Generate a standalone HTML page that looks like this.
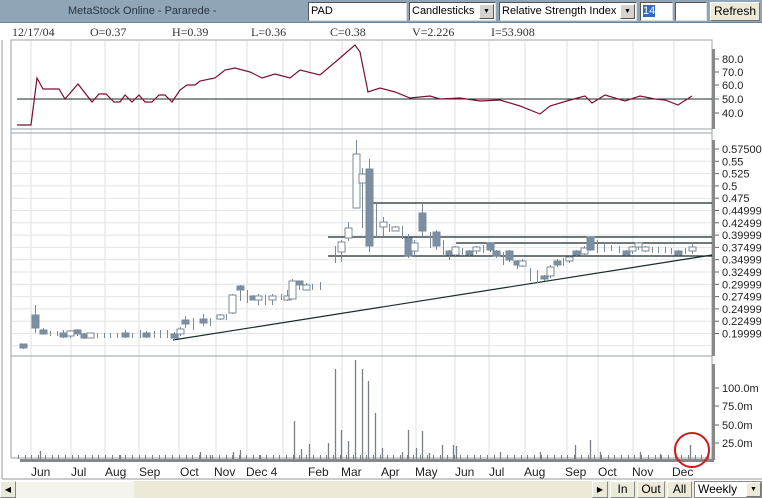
<!DOCTYPE html>
<html><head><meta charset="utf-8"><style>
*{margin:0;padding:0;box-sizing:border-box}
body{width:762px;height:498px;overflow:hidden;background:#fff;font-family:"Liberation Sans",sans-serif;position:relative}
.a{position:absolute}
#title{left:0;top:0;width:762px;height:23px;background:#8fa5b8;border-bottom:1px solid #6d8396}
.inp{background:#fff;border:1px solid #555;border-right-color:#ddd;border-bottom-color:#ddd;font-size:11px;padding-left:2px;line-height:16px;height:19px;top:2px;white-space:nowrap;overflow:hidden}
.sel .btn{position:absolute;right:1px;top:1px;width:15px;height:15px;background:#d6d3ce;border:1px solid;border-color:#fff #555 #555 #fff;font-size:7px;text-align:center;line-height:13px}
#info span{position:absolute;top:25px;font-family:"Liberation Serif",serif;font-size:12px;color:#333}
.bt{background:#ece9d8;border:1px solid;border-color:#fff #888 #888 #fff;font-size:12px;text-align:center;line-height:15px;height:17px;top:481px}
</style></head><body>
<div id="title" class="a"></div>
<div class="a" style="left:68px;top:5px;font-size:11px;color:#2a3542">MetaStock Online - Pararede -</div>
<div class="a inp" style="left:308px;width:99px">PAD</div>
<div class="a inp sel" style="left:409px;width:87px">Candlesticks<div class="btn">▼</div></div>
<div class="a inp sel" style="left:499px;width:138px">Relative Strength Index<div class="btn">▼</div></div>
<div class="a inp" style="left:640px;width:33px"><span style="background:#316ac5;color:#fff">14</span></div>
<div class="a inp" style="left:675px;width:32px"></div>
<div class="a" style="left:710px;top:2px;width:50px;height:19px;background:#ece9d8;border:1px solid;border-color:#fff #777 #777 #fff;font-size:12px;text-align:center;line-height:17px">Refresh</div>
<div id="info">
<span style="left:12px">12/17/04</span><span style="left:90px">O=0.37</span><span style="left:172px">H=0.39</span><span style="left:251px">L=0.36</span><span style="left:330px">C=0.38</span><span style="left:412px">V=2.226</span><span style="left:491px">I=53.908</span>
</div>
<svg class="a" style="left:0;top:0" width="762" height="498" id="ch" font-family="Liberation Sans" font-size="11" fill="#222">
<line x1="2" y1="40" x2="2" y2="479" stroke="#999"/>
<line x1="2" y1="479" x2="762" y2="479" stroke="#999"/>
<g id="grid"></g>
<rect x="11" y="40" width="701" height="418" fill="none" stroke="#9aa0a6"/>
<line x1="11" y1="129" x2="712" y2="129" stroke="#9aa0a6"/>
<line x1="11" y1="133" x2="712" y2="133" stroke="#9aa0a6"/>
<line x1="11" y1="356" x2="712" y2="356" stroke="#9aa0a6"/>
<rect x="712" y="49" width="3" height="80" fill="#888"/>
<rect x="712" y="140" width="3" height="216" fill="#888"/>
<rect x="712" y="364" width="3" height="96" fill="#888"/>
<rect x="20" y="459" width="694" height="3" fill="#888"/>
<g id="labels" font-size="11"></g>
<g id="c"></g>
<circle cx="692" cy="450" r="17" fill="none" stroke="#d01818" stroke-width="2"/>
</svg>
<div class="a" style="left:0;top:481px;width:762px;height:17px;background:#ece9d8"></div>
<div class="a" style="left:16px;top:481px;width:118px;height:17px;background:#f4f3ee;border-top:1px solid #fff"></div>
<div class="a bt" style="left:0;width:16px;font-size:8px">◀</div>
<div class="a bt" style="left:592px;width:16px;font-size:8px">▶</div>
<div class="a bt" style="left:610px;width:25px">In</div>
<div class="a bt" style="left:637px;width:28px">Out</div>
<div class="a bt" style="left:667px;width:25px">All</div>
<div class="a" style="left:694px;top:481px;width:68px;height:17px;background:#fff;border:1px solid #888;font-size:12px;line-height:15px;padding-left:3px">Weekly<div style="position:absolute;right:0;top:0;width:15px;height:15px;background:#ece9d8;border:1px solid;border-color:#fff #777 #777 #fff;font-size:7px;text-align:center;line-height:13px">▼</div></div>
<script>
var NS="http://www.w3.org/2000/svg";
function el(p,t,a,txt){var e=document.createElementNS(NS,t);for(var k in a)e.setAttribute(k,a[k]);if(txt)e.textContent=txt;document.getElementById(p).appendChild(e);return e;}
var gx=[31,71,105,139,179,216,247,283,310,342,382,416,455,489,525,567,598,633,674];
gx.forEach(function(x){el("grid","line",{x1:x,y1:41,x2:x,y2:458,stroke:"#dcdfe2"});});
for(var y=149;y<356;y+=12.3)el("grid","line",{x1:12,y1:y,x2:711,y2:y,stroke:"#e2e4e6"});
[["80.0",63],["70.0",76],["60.0",89],["50.0",103],["40.0",117]].forEach(function(l){el("labels","text",{x:722,y:l[1]},l[0]);el("labels","line",{x1:715,y1:l[1]-4,x2:719,y2:l[1]-4,stroke:"#666"});});
var pl=["0.57500","0.55","0.525","0.5","0.475","0.44999","0.42499","0.39999","0.37499","0.34999","0.32499","0.29999","0.27499","0.24999","0.22499","0.19999"];
pl.forEach(function(t,i){var y=153+i*12.3;el("labels","text",{x:722,y:y},t);el("labels","line",{x1:715,y1:y-4,x2:719,y2:y-4,stroke:"#666"});});
[["100.0m",392],["75.0m",410],["50.0m",429],["25.0m",447]].forEach(function(l){el("labels","text",{x:722,y:l[1]},l[0]);el("labels","line",{x1:715,y1:l[1]-4,x2:719,y2:l[1]-4,stroke:"#666"});});
[["Jun",31],["Jul",71],["Aug",105],["Sep",139],["Oct",180],["Nov",214],["Dec  4",246],["Feb",308],["Mar",341],["Apr",381],["May",415],["Jun",455],["Jul",489],["Aug",524],["Sep",565],["Oct",598],["Nov",632],["Dec",672]].forEach(function(m){el("labels","text",{x:m[1],y:476,"font-size":"12"},m[0]);});
var r=[[17,125],[31,125],[37,78],[43,89],[59,89],[65,99],[78,84],[92,102],[99,94],[106,94],[114,102],[120,102],[125,95],[132,102],[139,95],[145,102],[152,102],[159,95],[165,95],[172,102],[180,90],[187,85],[195,85],[200,81],[215,78],[225,70],[235,68],[250,72],[262,78],[275,74],[290,78],[300,70],[320,75],[340,58],[355,45],[360,52],[368,92],[380,88],[395,92],[410,98],[430,96],[440,99],[460,98],[480,101],[500,100],[520,106],[540,114],[550,106],[570,100],[585,96],[592,103],[605,95],[625,101],[640,96],[655,99],[665,100],[678,105],[692,96]];
el("c","line",{x1:17,y1:99,x2:712,y2:99,stroke:"#1a2a2a"});
el("c","polyline",{points:r.map(function(p){return p.join(",")}).join(" "),fill:"none",stroke:"#7a1030","stroke-width":"1.2"});
[[367,203],[328,237],[456,243],[328,256]].forEach(function(l){el("c","line",{x1:l[0],y1:l[1],x2:712,y2:l[1],stroke:"#1a2a2a","stroke-width":"1.2"});});
el("c","line",{x1:173,y1:340,x2:712,y2:255,stroke:"#1a2a2a","stroke-width":"1.2"});
var cd=[[23,344,349,344,348,1],[35,305,333,315,328,1],[43,328,334,330,334,1],[50,331,336,0,0,0],[57,331,336,0,0,0],[63,330,338,333,337,1],[70,330,338,331,336,0],[77,329,336,330,334,1],[84,333,339,334,338,1],[90,333,338,333,338,0],[97,333,338,0,0,0],[104,333,338,0,0,0],[110,333,338,0,0,0],[117,333,338,0,0,0],[125,330,338,333,337,1],[132,333,338,0,0,0],[140,330,338,0,0,0],[146,331,338,333,337,1],[154,331,338,0,0,0],[160,330,338,0,0,0],[167,330,338,0,0,0],[174,332,340,334,338,1],[180,327,336,329,334,0],[185,316,328,320,324,1],[193,318,330,0,0,0],[203,314,326,319,323,1],[210,318,326,0,0,0],[220,314,320,315,319,0],[226,314,320,0,0,0],[232,294,314,295,313,0],[240,285,301,286,290,1],[247,290,303,0,0,0],[253,295,300,296,300,1],[258,294,305,296,300,0],[265,295,305,0,0,0],[272,294,305,296,300,0],[281,294,300,0,0,0],[287,290,301,296,300,0],[292,279,299,281,299,0],[299,281,290,281,285,1],[306,283,290,285,290,0],[312,284,290,0,0,0],[320,282,290,0,0,0],[335,246,263,0,0,0],[341,240,262,242,252,0],[348,222,241,228,238,0],[356,140,208,154,208,0],[362,168,228,174,183,0],[369,159,252,169,246,1],[376,204,237,0,0,0],[383,217,236,222,227,0],[389,224,232,0,0,0],[395,226,231,227,231,0],[402,226,239,0,0,0],[408,234,258,238,256,1],[414,240,257,243,251,0],[422,203,237,213,231,1],[430,232,248,0,0,0],[436,230,250,232,246,1],[443,240,256,0,0,0],[449,250,260,251,255,1],[455,246,256,247,255,0],[462,248,255,0,0,0],[469,250,257,251,255,1],[476,246,254,247,251,0],[483,245,253,0,0,0],[490,242,252,243,250,1],[496,250,258,251,256,1],[503,252,265,0,0,0],[509,250,262,251,260,1],[517,260,269,261,265,1],[522,259,267,261,266,0],[530,268,281,0,0,0],[537,270,283,0,0,0],[544,275,281,276,279,1],[550,265,278,267,276,0],[557,259,267,261,265,1],[563,258,266,0,0,0],[569,255,263,257,261,0],[576,250,256,251,255,1],[584,246,255,248,254,0],[590,236,251,237,250,1],[597,240,253,0,0,0],[604,242,252,0,0,0],[611,245,251,0,0,0],[619,246,253,0,0,0],[626,250,256,251,255,1],[632,246,254,247,251,0],[638,242,250,243,247,0],[645,246,252,247,251,0],[652,247,253,0,0,0],[658,247,253,0,0,0],[665,247,253,0,0,0],[671,248,254,0,0,0],[678,250,256,251,255,1],[685,248,254,0,0,0],[692,242,254,247,251,0]];
cd.forEach(function(c){el("c","line",{x1:c[0]+.5,y1:c[1],x2:c[0]+.5,y2:c[2],stroke:"#7a8a99"});if(c[3])el("c","rect",{x:c[0]-3,y:c[3],width:7,height:c[4]-c[3],fill:c[5]?"#7a8fa3":"#fff",stroke:"#7a8a99"});});
var vol={294:421,301:449,309:444,328:443,335:369,341:430,348:441,355:360,362:369,368:381,375:413,382:448,402:452,408:430,416:448,422:431,429:453,442:445,453:445,456:446,40:451,120:455,200:452,210:455,233:452,240:450,260:455,500:452,540:452,575:445,590:440,600:452,640:452,660:454,690:445};
for(var i=0;i<104;i++){var x=Math.round(18+i*6.7);el("c","line",{x1:x+.5,y1:455,x2:x+.5,y2:459,stroke:"#7a7f85"});}
for(var k in vol)el("c","line",{x1:+k+.5,y1:vol[k],x2:+k+.5,y2:459,stroke:"#7a7f85","stroke-width":"1.3"});
</script>
</body></html>
